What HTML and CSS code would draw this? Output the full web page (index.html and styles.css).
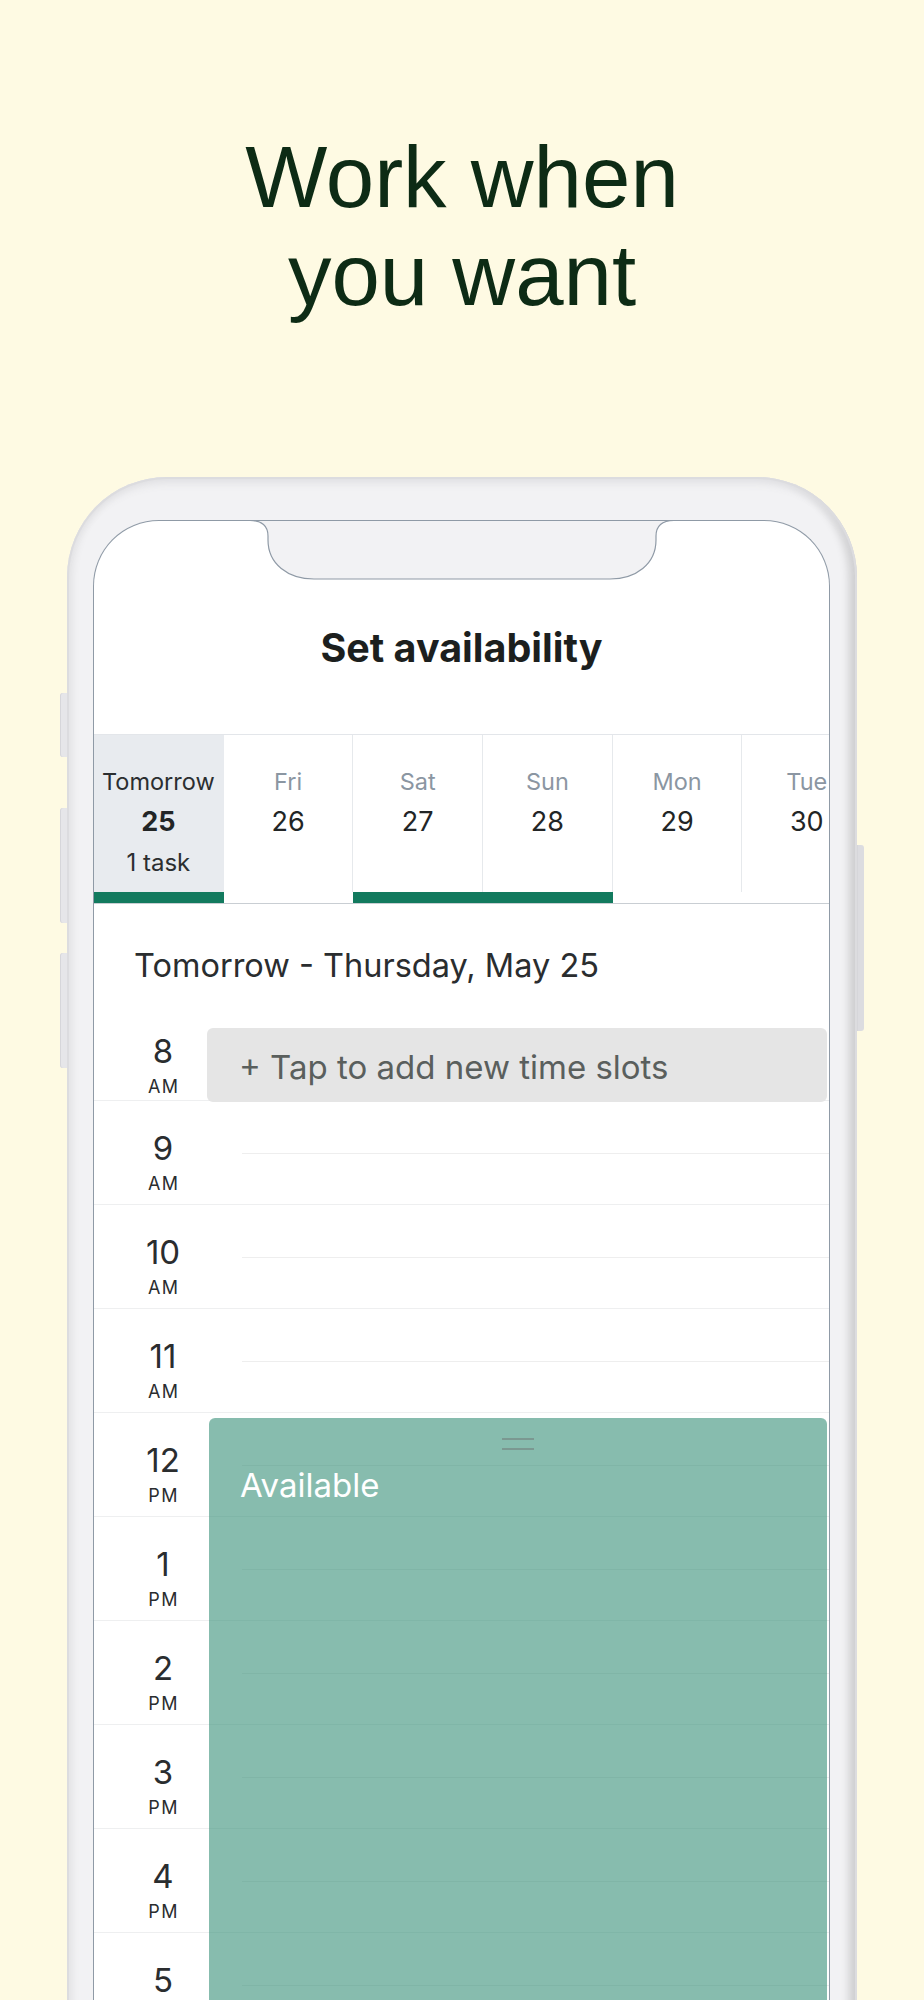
FILE: index.html
```html
<!DOCTYPE html>
<html lang="en">
<head>
    <meta charset="UTF-8">
    <meta name="viewport" content="width=device-width, initial-scale=1.0">
    <title>Work when you want</title>
    <link rel="stylesheet" href="styles.css">
</head>
<body>

    <h1 class="hero">Work when<br>you want</h1>

    <div class="phone">
        <!-- side buttons -->
        <span class="side-btn side-btn-1"></span>
        <span class="side-btn side-btn-2"></span>
        <span class="side-btn side-btn-3"></span>
        <span class="side-btn side-btn-power"></span>

        <div class="screen">
            <svg class="notch" width="424" height="62" viewBox="0 0 424 62">
                <path d="M0,0 L0,0.5 C12,0.5 18,6 18,16 L18,20 C18,44 38,59 64,59 L360,59 C386,59 406,44 406,20 L406,16 C406,6 412,0.5 424,0.5 L424,0 Z" fill="#f2f2f4"/>
                <path d="M0,0.5 C12,0.5 18,6 18,16 L18,20 C18,44 38,59 64,59 L360,59 C386,59 406,44 406,20 L406,16 C406,6 412,0.5 424,0.5" fill="none" stroke="#8f9aa6" stroke-width="1.2"/>
            </svg>

            <h2 class="screen-title">Set availability</h2>

            <div class="days">
                <div class="day active marked">
                    <div class="day-body">
                        <span class="day-name">Tomorrow</span>
                        <span class="day-num">25</span>
                        <span class="day-tasks">1 task</span>
                    </div>
                    <div class="day-bar"></div>
                </div>
                <div class="day">
                    <div class="day-body">
                        <span class="day-name">Fri</span>
                        <span class="day-num">26</span>
                    </div>
                    <div class="day-bar"></div>
                </div>
                <div class="day marked">
                    <div class="day-body">
                        <span class="day-name">Sat</span>
                        <span class="day-num">27</span>
                    </div>
                    <div class="day-bar"></div>
                </div>
                <div class="day marked">
                    <div class="day-body">
                        <span class="day-name">Sun</span>
                        <span class="day-num">28</span>
                    </div>
                    <div class="day-bar"></div>
                </div>
                <div class="day">
                    <div class="day-body">
                        <span class="day-name">Mon</span>
                        <span class="day-num">29</span>
                    </div>
                    <div class="day-bar"></div>
                </div>
                <div class="day">
                    <div class="day-body">
                        <span class="day-name">Tue</span>
                        <span class="day-num">30</span>
                    </div>
                    <div class="day-bar"></div>
                </div>
            </div>

            <p class="date-title">Tomorrow - Thursday, May 25</p>

            <div class="schedule">
                <div class="hour first"><div class="hour-label"><span class="h">8</span><span class="ampm">AM</span></div></div>
                <div class="hour"><div class="hour-label"><span class="h">9</span><span class="ampm">AM</span></div></div>
                <div class="hour"><div class="hour-label"><span class="h">10</span><span class="ampm">AM</span></div></div>
                <div class="hour"><div class="hour-label"><span class="h">11</span><span class="ampm">AM</span></div></div>
                <div class="hour"><div class="hour-label"><span class="h">12</span><span class="ampm">PM</span></div></div>
                <div class="hour"><div class="hour-label"><span class="h">1</span><span class="ampm">PM</span></div></div>
                <div class="hour"><div class="hour-label"><span class="h">2</span><span class="ampm">PM</span></div></div>
                <div class="hour"><div class="hour-label"><span class="h">3</span><span class="ampm">PM</span></div></div>
                <div class="hour"><div class="hour-label"><span class="h">4</span><span class="ampm">PM</span></div></div>
                <div class="hour"><div class="hour-label"><span class="h">5</span><span class="ampm">PM</span></div></div>
                <div class="hour"><div class="hour-label"><span class="h">6</span><span class="ampm">PM</span></div></div>

                <!-- blocks laid over the hour grid -->
                <div class="add-slot">+ Tap to add new time slots</div>
                <div class="available">
                    <div class="handle"><span></span><span></span></div>
                    <span class="available-text">Available</span>
                </div>
            </div>
        </div>
    </div>

</body>
</html>
```

FILE: styles.css
```css
body {
    margin: 0;
    background-color: #fefae3;
    font-family: "Inter", "Noto Sans", sans-serif;
    overflow: hidden;
}

.hero {
    margin: 128px 0 0;
    font-family: "Liberation Sans", Arial, sans-serif;
    font-weight: 400;
    font-size: 87px;
    line-height: 98px;
    color: #0d2b15;
    text-align: center;
}

/* phone frame */
.phone {
    position: relative;
    width: 790px;
    margin: 153px auto 0;
    padding: 43px 27px 0 26px;
    box-sizing: border-box;
    background-color: #f2f2f4;
    border-radius: 100px 100px 0 0;
    box-shadow:
        inset 0 0 0 2px #dcdcdf,
        inset 0 12px 8px -6px #e0e0e3,
        inset 9px 0 8px -4px rgba(0, 0, 0, 0.07),
        inset -12px 0 8px -4px rgba(0, 0, 0, 0.15);
}

.side-btn {
    position: absolute;
    width: 7px;
    background-color: #e6e6e9;
    border-radius: 3px 0 0 3px;
    box-shadow: inset 1px 0 0 #d6d6da;
}

.side-btn-1 { left: -7px; top: 216px; height: 64px; }
.side-btn-2 { left: -7px; top: 331px; height: 115px; }
.side-btn-3 { left: -7px; top: 476px; height: 115px; }

.side-btn-power {
    right: -7px;
    top: 368px;
    height: 186px;
    border-radius: 0 3px 3px 0;
    background-color: #dcdce0;
}

.screen {
    position: relative;
    background-color: #fff;
    border: 1px solid #8f9aa6;
    border-bottom: none;
    border-radius: 66px 66px 0 0;
    overflow: hidden;
    min-height: 1600px;
}

.notch {
    position: absolute;
    left: 156px;
    top: -1px;
    display: block;
}

.screen-title {
    margin: 103.5px 0 0;
    font-size: 39.5px;
    line-height: 46px;
    font-weight: 700;
    color: #1c1f1e;
    text-align: center;
}

/* day tabs */
.days {
    display: flex;
    margin-top: 63px;
    border-top: 1px solid #e3e6ea;
    border-bottom: 1px solid #c9ced3;
}

.day {
    flex: none;
    width: 129.7px;
    display: flex;
    flex-direction: column;
}

.day-body {
    height: 157px;
    box-sizing: border-box;
    padding-top: 32.5px;
    border-right: 1px solid #e6e9ec;
    display: flex;
    flex-direction: column;
    align-items: center;
}

.day.active .day-body {
    background-color: #e8ebef;
    border-right-color: #e8ebef;
}

.day-bar {
    height: 11px;
}

.day.marked .day-bar {
    background-color: #127a5e;
}

.day-name {
    font-size: 23.5px;
    line-height: 30px;
    color: #8b96a2;
}

.day.active .day-name {
    color: #2b2e30;
}

.day-num {
    margin-top: 4.5px;
    font-size: 27px;
    line-height: 40px;
    color: #222526;
}

.day.active .day-num {
    font-weight: 700;
}

.day-tasks {
    margin-top: 6px;
    font-size: 24px;
    line-height: 30px;
    color: #2b2e30;
}

.date-title {
    margin: 42.5px 0 0 40px;
    font-size: 32.5px;
    line-height: 40px;
    color: #2a2d2f;
}

/* hour grid */
.schedule {
    position: relative;
    margin-top: 18px;
}

.hour {
    height: 104px;
    box-sizing: border-box;
    border-bottom: 1px solid #eeeff0;
    background: linear-gradient(#eeeeee, #eeeeee) no-repeat 148px 52px / calc(100% - 148px) 1px;
}

.hour.first {
    height: 97px;
    background: none;
}

.hour-label {
    width: 138px;
    padding-top: 28.5px;
    display: flex;
    flex-direction: column;
    align-items: center;
    color: #2a2d2f;
}

.hour-label .h {
    font-size: 33px;
    line-height: 36px;
}

.hour-label .ampm {
    margin-top: 8px;
    font-size: 18px;
    line-height: 20px;
    letter-spacing: 1.5px;
    padding-left: 1.5px;
}

.add-slot {
    position: absolute;
    top: 24px;
    left: 113px;
    right: 2px;
    height: 74px;
    box-sizing: border-box;
    padding: 4px 0 0 32px;
    background-color: #e5e5e5;
    border-radius: 6px;
    font-size: 33px;
    line-height: 70px;
    color: #5a5f5d;
}

.available {
    position: absolute;
    top: 414px;
    left: 115px;
    right: 2px;
    bottom: 0;
    padding-left: 31px;
    background-color: rgba(55, 143, 120, 0.6);
    border-radius: 6px 6px 0 0;
    display: flex;
    flex-direction: column;
}

.handle {
    margin: 20px 0 0 -31px;
    display: flex;
    flex-direction: column;
    align-items: center;
    gap: 8px;
}

.handle span {
    width: 32px;
    height: 2px;
    background-color: #7b9891;
}

.available-text {
    margin-top: 17px;
    font-size: 33px;
    line-height: 36px;
    color: #fff;
}
```
